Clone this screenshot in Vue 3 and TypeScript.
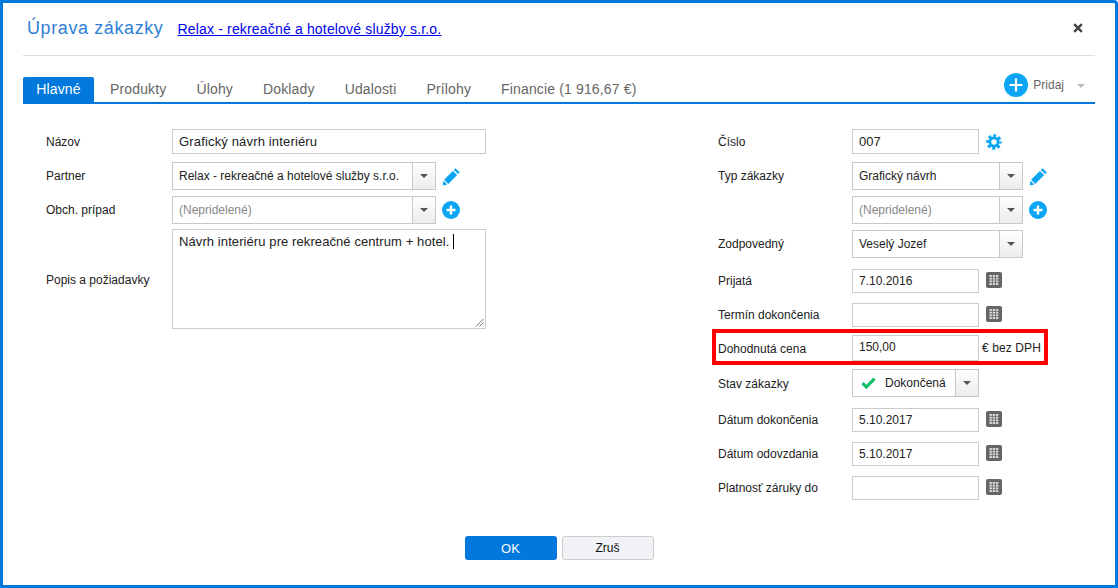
<script setup lang="ts">
const tabs: string[] = ['Produkty', 'Úlohy', 'Doklady', 'Udalosti', 'Prílohy', 'Financie (1 916,67 €)']
const cells: number[][] = []
for (let r = 0; r < 4; r++) for (let c = 0; c < 3; c++) cells.push([3.5 + c * 3.2, 3 + r * 2.7])
</script>

<template>
  <div class="dialog">
    <header class="head">
      <h1 class="title">Úprava zákazky</h1>
      <a class="link" href="#">Relax - rekreačné a hotelové služby s.r.o.</a>
      <svg class="close" width="10" height="10" viewBox="0 0 10 10"><path d="M1.2 1.2l7.6 7.6M8.8 1.2l-7.6 7.6" stroke="#444" stroke-width="2.4" /></svg>
    </header>

    <nav class="tabs">
      <span class="tab active">Hlavné</span>
      <span v-for="t in tabs" :key="t" class="tab">{{ t }}</span>
      <div class="add">
        <svg width="24" height="24" viewBox="0 0 24 24"><circle cx="12" cy="12" r="12" fill="#0aa5f5" /><path d="M12 5.5v13M5.5 12h13" stroke="#fff" stroke-width="2.2" /></svg>
        <span class="add-label">Pridaj</span>
        <span class="add-caret"></span>
      </div>
    </nav>

    <main class="form">
      <section class="col left">
        <div class="row h25"><label>Názov</label><input class="inp wide ls" value="Grafický návrh interiéru" /></div>
        <div class="row h28 mt8">
          <label>Partner</label>
          <div class="sel wide2"><span class="val sm">Relax - rekreačné a hotelové služby s.r.o.</span><span class="btn"><i></i></span></div>
          <svg class="ico" width="19" height="19" viewBox="0 0 19 19"><path d="M13.6 1.2l4.2 4.2-1.7 1.7-4.2-4.2zM10.9 3.9l4.2 4.2-8.8 8.8-4.2-4.2zM1.4 13.7l3.9 3.9-4.6 1z" fill="#0aa5f5" /></svg>
        </div>
        <div class="row h28 mt6">
          <label>Obch. prípad</label>
          <div class="sel wide2"><span class="val sm ph">(Nepridelené)</span><span class="btn"><i></i></span></div>
          <svg class="ico" width="18" height="18" viewBox="0 0 18 18"><circle cx="9" cy="9" r="9" fill="#0aa5f5" /><path d="M9 4.5v9M4.5 9h9" stroke="#fff" stroke-width="2.4" /></svg>
        </div>
        <div class="row area-row">
          <label class="low">Popis a požiadavky</label>
          <div class="area">Návrh interiéru pre rekreačné centrum + hotel. <span class="caret"></span>
            <svg class="grip" width="9" height="9" viewBox="0 0 9 9"><path d="M1 8.5L8.5 1M4.5 8.5l4-4" stroke="#777" stroke-width="1" /></svg>
          </div>
        </div>
      </section>

      <section class="col right">
        <div class="row h25">
          <label>Číslo</label><input class="inp nar" value="007" />
          <svg class="ico r" width="16" height="16" viewBox="0 0 17 17"><circle cx="8.5" cy="8.5" r="4.4" fill="none" stroke="#0aa5f5" stroke-width="3" /><circle cx="8.5" cy="8.5" r="6.5" fill="none" stroke="#0aa5f5" stroke-width="3.6" stroke-dasharray="2.9 2.2" stroke-dashoffset="1.45" /></svg>
        </div>
        <div class="row h28 mt8">
          <label>Typ zákazky</label>
          <div class="sel mid"><span class="val sm">Grafický návrh</span><span class="btn"><i></i></span></div>
          <svg class="ico" width="19" height="19" viewBox="0 0 19 19"><path d="M13.6 1.2l4.2 4.2-1.7 1.7-4.2-4.2zM10.9 3.9l4.2 4.2-8.8 8.8-4.2-4.2zM1.4 13.7l3.9 3.9-4.6 1z" fill="#0aa5f5" /></svg>
        </div>
        <div class="row h28 mt6">
          <label></label>
          <div class="sel mid"><span class="val sm ph">(Nepridelené)</span><span class="btn"><i></i></span></div>
          <svg class="ico" width="18" height="18" viewBox="0 0 18 18"><circle cx="9" cy="9" r="9" fill="#0aa5f5" /><path d="M9 4.5v9M4.5 9h9" stroke="#fff" stroke-width="2.4" /></svg>
        </div>
        <div class="row h28 mt6">
          <label>Zodpovedný</label>
          <div class="sel mid"><span class="val sm">Veselý Jozef</span><span class="btn"><i></i></span></div>
        </div>
        <div class="row h24 mt11">
          <label>Prijatá</label><input class="inp nar sm" value="7.10.2016" />
          <svg class="ico r cal" width="16" height="16" viewBox="0 0 16 16"><rect width="16" height="16" rx="2" fill="#666" /><rect v-for="(c, i) in cells" :key="i" :x="c[0]" :y="c[1]" width="2.4" height="1.9" fill="#ddd" /></svg>
        </div>
        <div class="row h24 mt10">
          <label>Termín dokončenia</label><input class="inp nar sm" />
          <svg class="ico r cal" width="16" height="16" viewBox="0 0 16 16"><rect width="16" height="16" rx="2" fill="#666" /><rect v-for="(c, i) in cells" :key="i" :x="c[0]" :y="c[1]" width="2.4" height="1.9" fill="#ddd" /></svg>
        </div>
        <div class="row h26 mt8 marked">
          <label class="low">Dohodnutá cena</label><input class="inp nar sm price" value="150,00" />
          <span class="unit">€ bez DPH</span>
        </div>
        <div class="row h28 mt8">
          <label class="low">Stav zákazky</label>
          <div class="sel nar">
            <span class="val sm state">
              <svg width="15" height="12" viewBox="0 0 15 12"><path d="M1.5 6.2l3.8 3.8 8.2-8.4" fill="none" stroke="#12c06a" stroke-width="3.2" /></svg>
              Dokončená
            </span>
            <span class="btn"><i></i></span>
          </div>
        </div>
        <div class="row h24 mt11">
          <label>Dátum dokončenia</label><input class="inp nar sm" value="5.10.2017" />
          <svg class="ico r cal" width="16" height="16" viewBox="0 0 16 16"><rect width="16" height="16" rx="2" fill="#666" /><rect v-for="(c, i) in cells" :key="i" :x="c[0]" :y="c[1]" width="2.4" height="1.9" fill="#ddd" /></svg>
        </div>
        <div class="row h24 mt10">
          <label>Dátum odovzdania</label><input class="inp nar sm" value="5.10.2017" />
          <svg class="ico r cal" width="16" height="16" viewBox="0 0 16 16"><rect width="16" height="16" rx="2" fill="#666" /><rect v-for="(c, i) in cells" :key="i" :x="c[0]" :y="c[1]" width="2.4" height="1.9" fill="#ddd" /></svg>
        </div>
        <div class="row h24 mt10">
          <label>Platnosť záruky do</label><input class="inp nar sm" />
          <svg class="ico r cal" width="16" height="16" viewBox="0 0 16 16"><rect width="16" height="16" rx="2" fill="#666" /><rect v-for="(c, i) in cells" :key="i" :x="c[0]" :y="c[1]" width="2.4" height="1.9" fill="#ddd" /></svg>
        </div>
      </section>
    </main>

    <footer class="foot">
      <button class="b ok">OK</button>
      <button class="b cancel">Zruš</button>
    </footer>
  </div>
</template>

<style>
html, body { margin: 0; background: #fff; }
</style>

<style scoped>
.dialog {
  box-sizing: border-box;
  width: 1118px;
  height: 588px;
  border: 3px solid #0078dc;
  border-top-right-radius: 4px;
  padding: 0 20px;
  background: #fff;
  font-family: "Liberation Sans", Arial, sans-serif;
  font-size: 12px;
  color: #222;
  display: flex;
  flex-direction: column;
}
.head {
  height: 53px;
  box-sizing: border-box;
  border-bottom: 1px solid #ddd;
  display: flex;
  align-items: center;
  padding: 0 2px 0 4px;
}
.title {
  margin: 0;
  font-size: 18px;
  font-weight: 400;
  letter-spacing: 0.6px;
  color: #2f7fd6;
  margin-top: -2px;
}
.link {
  margin-left: 14px;
  font-size: 14px;
  letter-spacing: 0.17px;
  color: #0000ee;
  text-decoration: underline;
}
.close { margin-left: auto; margin-right: 10px; margin-top: -2px; }
.tabs {
  margin-top: 17px;
  height: 31px;
  box-sizing: border-box;
  border-bottom: 2px solid #0078dc;
  display: flex;
  align-items: flex-end;
}
.tab {
  font-size: 14px;
  letter-spacing: 0.15px;
  color: #666;
  height: 25px;
  line-height: 25px;
  padding: 0 15px 0 15px;
}
.tab.active {
  background: #0078dc;
  color: #fff;
  width: 71px;
  padding: 0;
  box-sizing: border-box;
  text-align: center;
  border-radius: 2px 2px 0 0;
  margin-right: 1px;
}
.add {
  margin-left: auto;
  display: flex;
  align-items: center;
  height: 24px;
  margin-bottom: 5px;
  padding-right: 10px;
}
.add-label { margin-left: 5px; margin-right: 1px; color: #666; }
.add-caret {
  margin-left: 12px;
  margin-top: 2px;
  border: 4px solid transparent;
  border-top: 4px solid #bbb;
  border-bottom: 0;
}
.form {
  margin-top: 25px;
  display: grid;
  grid-template-columns: 672px 1fr;
  padding-left: 23px;
}
.col { display: flex; flex-direction: column; }
.row { display: flex; align-items: center; }
.left label { width: 126px; flex: none; }
.right label { width: 134px; flex: none; }
.low { margin-top: 2px; }
.h24 { height: 24px; }
.h25 { height: 25px; }
.h26 { height: 26px; }
.h28 { height: 28px; }
.mt6 { margin-top: 6px; }
.mt8 { margin-top: 8px; }
.mt10 { margin-top: 10px; }
.mt11 { margin-top: 11px; }
.inp {
  box-sizing: border-box;
  height: 100%;
  border: 1px solid #ccc;
  padding: 0 6px;
  margin: 0;
  outline: none;
  background: #fff;
  font: 13px "Liberation Sans", Arial, sans-serif;
  color: #222;
}
.inp.sm { font-size: 12px; }
.inp.ls { letter-spacing: 0.16px; }
.inp.price { padding-bottom: 2px; }
.wide { width: 314px; }
.wide2 { width: 264px; }
.mid { width: 171px; }
.nar { width: 127px; }
.sel {
  box-sizing: border-box;
  height: 100%;
  border: 1px solid #c8c8c8;
  display: flex;
  align-items: center;
  background: #fff;
}
.val { flex: 1; padding-left: 6px; white-space: nowrap; overflow: hidden; }
.val.sm { font-size: 12px; }
.ph { color: #888; }
.btn {
  width: 22px;
  height: 100%;
  flex: none;
  border-left: 1px solid #c8c8c8;
  background: linear-gradient(#fff, #ececec);
  display: flex;
  align-items: center;
  justify-content: center;
}
.btn i {
  display: block;
  border: 4px solid transparent;
  border-top: 4px solid #555;
  border-bottom: 0;
}
.ico { margin-left: 6px; flex: none; }
.ico.r { margin-left: 7px; }
.ico.cal { margin-bottom: 2px; }
.area-row { margin-top: 5px; height: 100px; }
.area {
  position: relative;
  box-sizing: border-box;
  width: 314px;
  height: 100px;
  border: 1px solid #ccc;
  padding: 4px 6px;
  font-size: 13px;
  letter-spacing: 0.09px;
  line-height: 15px;
  white-space: pre-wrap;
}
.caret {
  display: inline-block;
  width: 1px;
  height: 15px;
  background: #000;
  vertical-align: -3px;
}
.grip { position: absolute; right: 1px; bottom: 1px; }
.marked { position: relative; }
.marked::after {
  content: "";
  position: absolute;
  left: -6px;
  top: -6px;
  width: 336px;
  height: 36px;
  border: 4px solid #f00;
  box-sizing: border-box;
  pointer-events: none;
}
.unit { margin-left: 3px; letter-spacing: 0.1px; }
.state { display: flex; align-items: center; padding-left: 8px; }
.state svg { margin-right: 9px; }
.foot {
  margin-top: auto;
  margin-bottom: 25px;
  display: flex;
  justify-content: center;
  gap: 5px;
}
.b {
  box-sizing: border-box;
  width: 92px;
  height: 24px;
  border-radius: 3px;
  font: 12px "Liberation Sans", Arial, sans-serif;
  padding: 0;
}
.ok { background: #0078dc; color: #fff; border: 0; font-size: 13px; }
.cancel { background: #f0f2f5; color: #111; border: 1px solid #ccc; }
</style>
